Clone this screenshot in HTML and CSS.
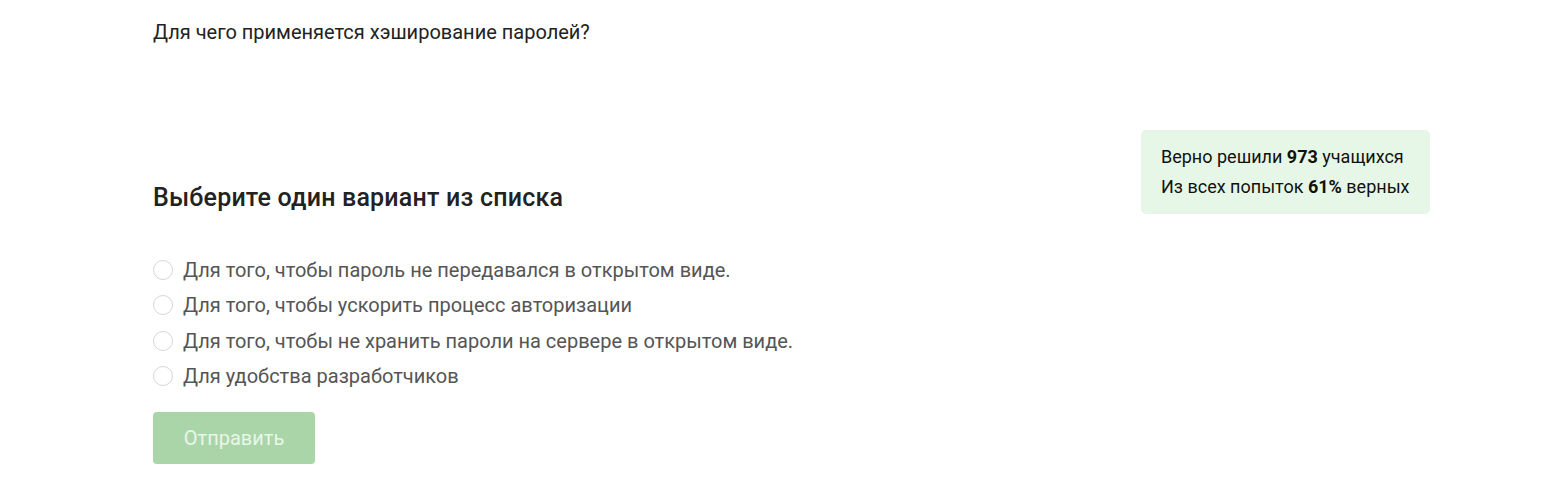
FILE: index.html
```html
<!DOCTYPE html>
<html lang="ru">
<head>
<meta charset="utf-8">
<link rel="stylesheet" href="styles.css">
</head>
<body>
<div class="page">
  <div class="question">Для чего применяется хэширование паролей?</div>
  <div class="main">
    <div class="left">
      <h2 class="title">Выберите один вариант из списка</h2>
      <ul class="options">
        <li class="option"><span class="radio"></span><span>Для того, чтобы пароль не передавался в открытом виде.</span></li>
        <li class="option"><span class="radio"></span><span>Для того, чтобы ускорить процесс авторизации</span></li>
        <li class="option"><span class="radio"></span><span>Для того, чтобы не хранить пароли на сервере в открытом виде.</span></li>
        <li class="option"><span class="radio"></span><span>Для удобства разработчиков</span></li>
      </ul>
      <button class="submit" type="button">Отправить</button>
    </div>
    <div class="stats">
      <div>Верно решили <b>973</b> учащихся</div>
      <div>Из всех попыток <b>61%</b> верных</div>
    </div>
  </div>
</div>
</body>
</html>
```
FILE: styles.css
```css
* { box-sizing: border-box; }
html, body { margin: 0; padding: 0; background: #fff; }
body { font-family: Roboto, "Noto Sans", sans-serif; color: #222; }
.page { width: 1277px; margin-left: 153px; padding-top: 21px; }
.question { font-size: 20px; line-height: 22px; color: #222; }
.main { display: flex; justify-content: space-between; align-items: flex-start; margin-top: 87px; }
.left { display: flex; flex-direction: column; }
.title { margin: 53px 0 0; font-size: 25px; font-weight: 500; line-height: 30px; color: #222; letter-spacing: 0.2px; }
.options { list-style: none; margin: 39px 0 0; padding: 0; }
.option { display: flex; align-items: center; height: 35.5px; font-size: 20px; color: #555; }
.radio { width: 20px; height: 20px; border: 1px solid #d6d6d6; border-radius: 50%; margin-right: 10px; flex: none; }
.submit { margin-top: 18px; width: 162px; height: 52px; border: none; border-radius: 4px; background: #a9d5a8; color: #eaf6ea; font-family: Roboto, sans-serif; font-size: 20px; padding: 0; text-align: center; }
.stats { background: #e7f7e7; border-radius: 5px; width: 289px; padding: 12px 20px; font-size: 18px; line-height: 30px; color: #111; }
.stats b { font-weight: 700; }
```
